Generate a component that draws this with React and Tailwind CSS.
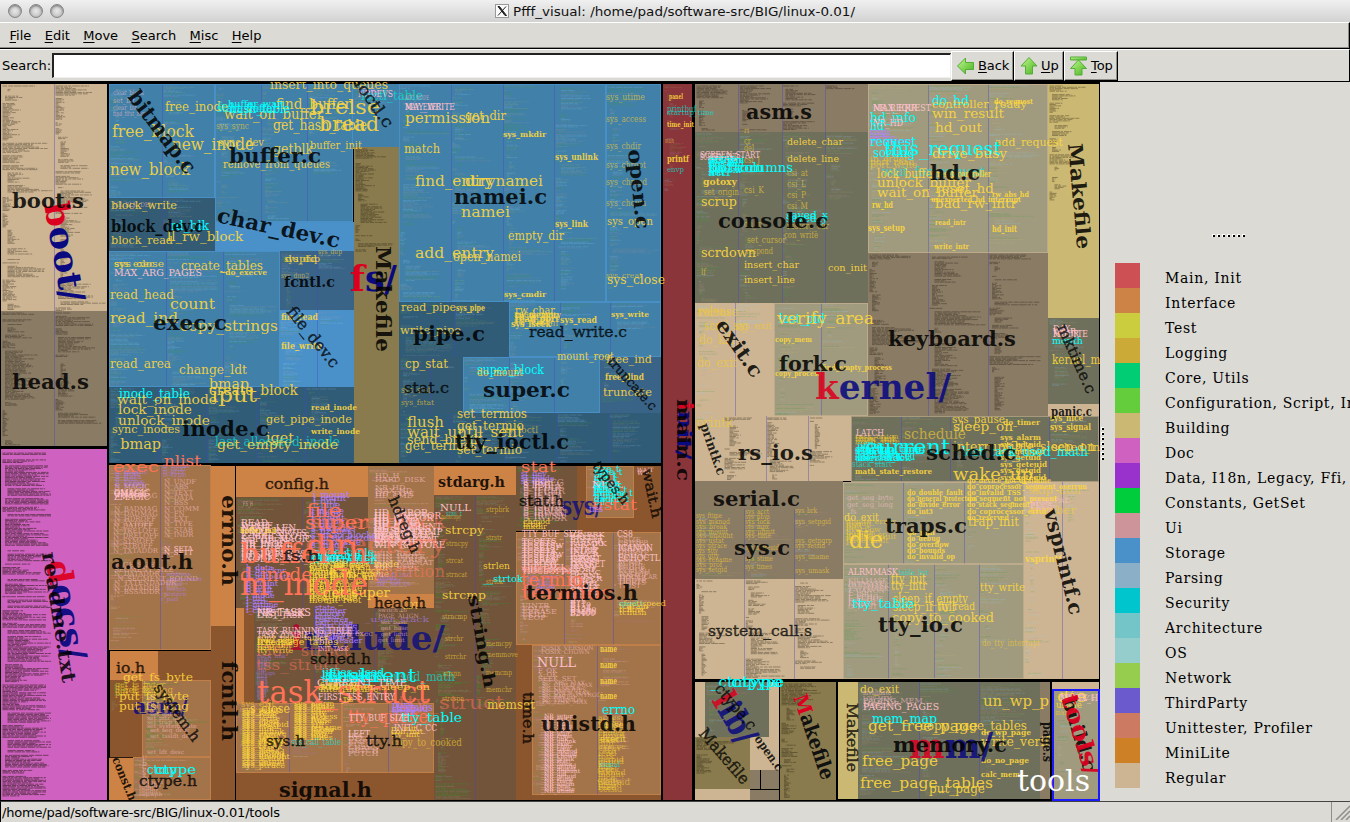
import React from "react";

const SAND = "#cdb593", TAUPE = "#8a7b65", BLUE = "#4180a8", LBLUE = "#4b91c9", DBLUE = "#315c78", NBLUE = "#3a6487";
const OLIVE = "#897b4d", KHAKI = "#cbb873", ORANGE = "#cd8246", BROWN = "#8b552d", TAN = "#a3744a", UMBER = "#71543a";
const SAGE = "#a09b7e", MOSS = "#6f705c", PINK = "#cf62c0", RED = "#8a353a";

// x1, y1, x2, y2, fill, columns, filled share of the last column, palette, outline
const FILES = [
  [1, 84, 107, 311, SAND, 2, 1, "k"], [1, 311, 107, 446, TAUPE, 2, 0.85, "k"],
  [1, 449, 107, 800, PINK, 2, 0, "k"],
  [109, 84, 215, 198, BLUE, 2, 0.95, "b", 1], [215, 84, 353, 222, BLUE, 3, 0.65, "b", 1], [353, 84, 399, 147, BLUE, 1, 0.4, "b"],
  [109, 198, 215, 251, "#335b74", 2, 0.5, "b"], [215, 222, 354, 251, LBLUE, 1, 0, "b"],
  [109, 251, 280, 387, BLUE, 3, 0.9, "b", 1], [280, 251, 354, 310, NBLUE, 2, 0.3, "b"], [279, 310, 354, 387, LBLUE, 2, 0.2, "b"],
  [109, 387, 354, 463, DBLUE, 5, 0.8, "b"], [354, 147, 399, 463, OLIVE, 1, 0.33, "k"],
  [399, 84, 606, 302, BLUE, 4, 0.95, "b", 1], [606, 84, 661, 302, BLUE, 1, 0.95, "b", 1],
  [399, 302, 509, 357, DBLUE, 2, 0.7, "b"], [509, 302, 661, 357, BLUE, 3, 0.5, "b", 1],
  [399, 357, 463, 413, "#335b74", 2, 0.2, "b"], [463, 357, 600, 413, BLUE, 3, 0.5, "b", 1], [600, 357, 661, 413, NBLUE, 1, 0.8, "b"],
  [399, 413, 661, 463, DBLUE, 5, 0.8, "b"],
  [109, 465, 211, 650, TAN, 2, 0.72, "p", 2], [211, 466, 235, 626, ORANGE, 1, 0, "k"], [211, 626, 235, 800, BROWN, 1, 0, "k"],
  [110, 651, 158, 680, ORANGE, 1, 0, "k"], [158, 651, 211, 680, BROWN, 1, 0, "k"], [110, 680, 142, 757, BROWN, 1, 0.4, "g"],
  [142, 680, 211, 757, TAN, 1, 0.98, "g", 2], [109, 757, 133, 800, ORANGE, 1, 0, "k"], [133, 757, 211, 800, TAN, 1, 0.9, "p", 2],
  [236, 466, 368, 497, ORANGE, 1, 0, "k"], [236, 497, 368, 608, UMBER, 2, 0.9, "g"], [368, 466, 434, 594, TAN, 1, 0.95, "p"],
  [368, 594, 434, 608, ORANGE, 1, 0, "k"], [236, 608, 244, 703, ORANGE, 1, 0, "k"], [244, 608, 254, 703, BROWN, 1, 0, "k"],
  [254, 608, 434, 703, UMBER, 3, 0.8, "g"], [236, 703, 342, 773, TAN, 2, 0.8, "p", 2], [342, 703, 434, 773, TAN, 2, 0.5, "p", 2],
  [236, 773, 434, 800, BROWN, 1, 0, "k"], [434, 466, 516, 495, ORANGE, 1, 0, "k"], [434, 495, 516, 800, UMBER, 2, 0.7, "g"],
  [516, 466, 577, 531, UMBER, 1, 0.95, "g"], [577, 466, 586, 532, BROWN, 1, 0, "k"], [586, 466, 634, 518, TAN, 1, 0.7, "p", 2],
  [586, 518, 634, 532, BROWN, 1, 0, "k"], [634, 466, 661, 532, BROWN, 1, 0, "k"],
  [516, 645, 532, 800, BROWN, 1, 0, "k"], [516, 532, 661, 645, TAN, 3, 0.8, "p", 2],
  [532, 645, 661, 795, TAN, 2, 0.95, "p", 2], [532, 795, 661, 800, BROWN, 1, 0, "k"],
  [663, 84, 692, 800, RED, 1, 0.15, "b"],
  [695, 84, 868, 132, TAUPE, 4, 0.1, "k"], [695, 132, 868, 303, MOSS, 4, 0.4, "b"],
  [868, 84, 1048, 253, SAGE, 3, 0.95, "b", 3], [868, 253, 1048, 416, TAUPE, 3, 0.97, "k"], [1048, 84, 1099, 318, KHAKI, 1, 0.5, "k"],
  [695, 303, 774, 416, SAND, 2, 0.2, "b"], [774, 303, 868, 416, SAGE, 2, 0.4, "b", 3],
  [1048, 318, 1099, 404, MOSS, 1, 0.8, "b"], [1048, 404, 1099, 416, SAND, 1, 0, "k"],
  [695, 416, 723, 481, SAND, 1, 0.1, "b"], [723, 416, 851, 481, SAND, 3, 0.8, "k"], [851, 416, 1099, 482, MOSS, 5, 0.4, "b", 3],
  [695, 481, 843, 509, TAUPE, 1, 0, "k"], [695, 509, 843, 579, TAUPE, 3, 0.7, "b"], [695, 579, 843, 679, SAND, 3, 0.9, "k"],
  [843, 482, 1024, 564, SAGE, 3, 0.9, "b", 3], [843, 564, 1024, 679, SAGE, 4, 0.7, "b", 3], [1024, 482, 1099, 679, SAND, 2, 0.2, "b"],
  [695, 682, 779, 737, SAND, 1, 0, "k"], [750, 737, 779, 770, SAND, 1, 0, "k"], [695, 789, 750, 800, SAND, 1, 0, "k"],
  [705, 682, 769, 737, MOSS, 1, 0.9, "b"], [695, 737, 750, 789, OLIVE, 1, 0.7, "k"], [750, 770, 760, 789, TAUPE, 1, 0, "k"],
  [761, 770, 779, 789, TAUPE, 1, 0, "k"], [750, 790, 779, 800, TAUPE, 1, 0, "k"],
  [780, 682, 836, 800, OLIVE, 1, 0.98, "k"],
  [838, 682, 858, 799, KHAKI, 1, 0, "k"], [858, 682, 1040, 799, MOSS, 3, 0.8, "b"], [1040, 682, 1050, 799, TAUPE, 1, 0, "k"],
  [1052, 682, 1099, 689, SAND, 1, 0, "k"], [1054, 691, 1098, 799, SAGE, 1, 0.8, "b"],
];

const PALETTES = {
  k: [["#1c140a", 0.45]],
  b: [["#8fd6ff", 0.26], ["#45a045", 0.28], ["#d8c86a", 0.16], ["#c9a0a0", 0.18]],
  p: [["#ffd0d8", 0.26], ["#b080ff", 0.18], ["#6f9a50", 0.28]],
  g: [["#2fa02f", 0.42], ["#9fb080", 0.28], ["#7fc0c0", 0.22]],
};

function makeRandom(seed) {
  let s = seed;
  return () => {
    s = (s * 1103515245 + 12345) % 2147483648;
    return s / 2147483648;
  };
}

// One path of short horizontal strokes per palette entry, for a file shown as tiny source lines.
function sourceLines(file, index) {
  const [x1, y1, x2, y2, , cols, last, kind] = file;
  const rnd = makeRandom(index * 977 + 31);
  const pal = PALETTES[kind];
  const paths = pal.map(() => "");
  const cw = (x2 - x1) / cols;
  const isDoc = index === 2;
  for (let c = 0; c < cols; c++) {
    if (isDoc && c > 0) break;
    const end = isDoc ? y2 - 3 : c === cols - 1 ? y1 + (y2 - y1) * last : y2 - 1;
    let indent = 0;
    let typical = 0.5;
    for (let y = y1 + 2; y < end; y += 1.3) {
      if (rnd() < 0.13) {
        typical = isDoc ? 0.75 : 0.08 + rnd() * rnd() * 0.75;
        indent = Math.floor(rnd() * 3) * 2.5;
        y += 0.8;
        continue;
      }
      const len = cw * Math.min(isDoc ? 0.82 : 0.85, typical * (0.35 + rnd() * 1.1));
      const k = Math.floor(rnd() * pal.length);
      let x = x1 + c * cw + 1.5 + indent;
      const stop = x + Math.max(2, Math.min(len, cw - indent - 3));
      while (x < stop) {
        const word = Math.min(stop - x, 1.5 + rnd() * 7);
        paths[k] += `M${x.toFixed(1)} ${y.toFixed(1)}h${word.toFixed(1)}`;
        x += word + 0.5 + rnd() * 0.7;
      }
    }
  }
  return paths;
}

const COLORS = {
  k: ["#000000", 0.85], K: ["#000000", 0.72],
  y: ["#ffd83c", 0.9], Y: ["#f2cc30", 0.65],
  c: ["#00ffff", 1], C: ["#00e5dd", 0.7],
  p: ["#ffc0cb", 1], P: ["#ffc0cb", 0.6],
  o: ["#ff7256", 1], O: ["#ff7256", 0.55],
  v: ["#b080ff", 1], V: ["#b080ff", 0.6],
  w: ["#ffffff", 1],
};

// colour, size, x, baseline, width, text, angle
const LABELS = [
  // fs
  ["P", 7, 113, 95, 31, "clear_block"], ["P", 7, 113, 103, 22, "set_bit"], ["P", 7, 113, 110, 24, "clear_bit"], ["P", 7, 113, 116, 34, "find_first_zero"],
  ["y", 13, 165, 111, 63, "free_inode"], ["y", 16, 112, 137, 82, "free_block"], ["y", 16, 172, 150, 82, "new_inode"], ["y", 16, 110, 175, 80, "new_block"],
  ["y", 12, 270, 89, 118, "insert_into_queues"], ["y", 14, 276, 109, 75, "find_buffer"], ["y", 14, 224, 119, 99, "wait_on_buffer"],
  ["y", 14, 273, 130, 94, "get_hash_table"], ["y", 20, 310, 114, 70, "brelse"], ["y", 20, 319, 131, 60, "bread"],
  ["Y", 9, 216, 129, 33, "sys_sync"], ["y", 11, 218, 146, 46, "sync_dev"], ["y", 14, 273, 154, 40, "getblk"], ["y", 11, 310, 149, 52, "buffer_init"],
  ["y", 11, 223, 168, 107, "remove_from_queues"], ["c", 11, 217, 112, 60, "start_buffer"], ["c", 12, 230, 113, 60, "hash_table"], ["C", 10, 217, 109, 48, "free_list"],
  ["c", 10, 228, 107, 56, "buffer_wait"], ["p", 9, 358, 97, 35, "NRDEVS"], ["C", 12, 361, 100, 62, "ioctl_table"],
  ["p", 9, 405, 110, 50, "MAY_WRITE"], ["p", 9, 405, 110, 36, "MAY_EXEC"], ["P", 7, 405, 100, 24, "ACC_MODE"],
  ["P", 7, 113, 207, 40, "NR_BLK_DEV"], ["y", 11, 111, 209, 66, "block_write"], ["y", 11, 111, 244, 62, "block_read"],
  ["c", 12, 170, 230, 39, "rd_blk"], ["y", 13, 167, 241, 76, "ll_rw_block"],
  ["y", 10, 114, 267, 50, "sys_close"], ["y", 10, 114, 267, 40, "sys_exec"], ["y", 12, 181, 270, 82, "create_tables"], ["p", 10, 114, 276, 88, "MAX_ARG_PAGES"],
  ["y", 8, 219, 275, 48, "~do_execve"], ["y", 10, 285, 262, 32, "dupfd"], ["y", 10, 284, 262, 36, "sys_dup"], ["Y", 7, 318, 254, 24, "sys_dup"], ["Y", 7, 281, 278, 28, "sys_dup2"],
  ["y", 12, 110, 299, 64, "read_head"], ["y", 15, 170, 309, 45, "count"], ["y", 15, 110, 323, 68, "read_ind"], ["y", 15, 180, 331, 98, "copy_strings"],
  ["y", 12, 110, 368, 61, "read_area"], ["y", 12, 179, 374, 68, "change_ldt"], ["y", 9, 281, 320, 37, "file_read"], ["y", 9, 281, 349, 41, "file_write"],
  ["c", 12, 119, 398, 71, "inode_table"], ["y", 14, 209, 389, 40, "bmap"], ["y", 14, 209, 395, 89, "create_block"], ["y", 21, 211, 402, 46, "iput"],
  ["y", 13, 117, 404, 100, "wait_on_inode"], ["y", 13, 118, 414, 74, "lock_inode"], ["y", 13, 118, 425, 92, "unlock_inode"],
  ["y", 11, 112, 433, 68, "sync_inodes"], ["y", 14, 113, 449, 48, "_bmap"], ["y", 8, 311, 410, 46, "read_inode"], ["y", 11, 266, 423, 86, "get_pipe_inode"],
  ["y", 8, 311, 434, 49, "write_inode"], ["y", 13, 266, 442, 28, "iget"], ["C", 12, 215, 446, 125, "last_allocated_inode"], ["y", 13, 217, 449, 121, "get_empty_inode"],
  ["y", 14, 405, 123, 85, "permission"], ["y", 13, 465, 120, 41, "get_dir"], ["y", 8, 503, 137, 43, "sys_mkdir"], ["y", 12, 404, 153, 36, "match"],
  ["y", 9, 555, 160, 43, "sys_unlink"], ["y", 15, 415, 186, 78, "find_entry"], ["y", 15, 465, 186, 78, "dirynamei"], ["y", 14, 461, 217, 49, "namei"],
  ["y", 9, 555, 227, 33, "sys_link"], ["y", 13, 508, 240, 56, "empty_dir"], ["y", 15, 415, 258, 79, "add_entry"], ["y", 12, 453, 261, 68, "open_namei"], ["y", 8, 504, 297, 42, "sys_cmdir"],
  ["Y", 9, 606, 100, 39, "sys_utime"], ["Y", 9, 606, 122, 40, "sys_access"], ["Y", 9, 606, 149, 35, "sys_chdir"], ["Y", 9, 606, 168, 40, "sys_chroot"], ["Y", 9, 606, 185, 41, "sys_chmod"],
  ["Y", 9, 606, 206, 40, "sys_chown"], ["y", 11, 607, 225, 46, "sys_open"], ["Y", 8, 606, 278, 36, "sys_creat"], ["y", 12, 607, 284, 58, "sys_close"],
  ["y", 11, 401, 311, 55, "read_pipe"], ["y", 9, 456, 311, 29, "sys_pipe"], ["y", 11, 400, 334, 61, "write_pipe"],
  ["y", 11, 515, 314, 40, "rw_char"], ["y", 9, 515, 318, 46, "rw_memory"], ["y", 9, 515, 322, 44, "read_port"], ["y", 9, 511, 327, 40, "sys_lseek"], ["y", 9, 560, 323, 37, "sys_read"], ["y", 8, 611, 317, 38, "sys_write"],
  ["y", 11, 557, 360, 57, "mount_root"], ["y", 11, 606, 363, 46, "free_ind"], ["y", 9, 605, 380, 39, "free_dind"], ["y", 11, 603, 396, 49, "truncate"],
  ["c", 12, 477, 374, 67, "super_block"], ["y", 11, 477, 376, 46, "do_mount"], ["y", 12, 405, 368, 43, "cp_stat"], ["Y", 9, 401, 393, 30, "sys_stat"], ["Y", 8, 401, 405, 33, "sys_fstat"],
  ["y", 13, 457, 418, 70, "set_termios"], ["y", 14, 407, 427, 37, "flush"], ["y", 12, 457, 430, 67, "get_termio"], ["y", 14, 407, 437, 116, "wait_until_sent"],
  ["y", 12, 407, 444, 81, "send_break_"], ["Y", 9, 502, 433, 36, "tty_ioctl"], ["y", 12, 405, 450, 72, "get_termios"], ["y", 12, 457, 454, 65, "set_termio"],
  // include
  ["o", 14, 113, 472, 46, "exec"], ["o", 14, 164, 466, 37, "nlist"], ["p", 9, 114, 500, 36, "ZMAGIC"], ["p", 9, 114, 496, 36, "QMAGIC"], ["p", 9, 114, 497, 34, "OMAGIC"],
  ["y", 11, 123, 681, 70, "get_fs_byte"], ["y", 11, 119, 700, 70, "put_fs_byte"], ["y", 11, 119, 710, 70, "put_fs_long"], ["Y", 10, 123, 693, 50, "get_fs_long"],
  ["c", 13, 155, 774, 41, "ctype"], ["c", 12, 147, 774, 30, "ctmp"],
  ["P", 7, 241, 506, 12, "_FS_H"], ["y", 8, 240, 533, 37, "buffer_init"], ["O", 18, 310, 528, 136, "super_block"], ["O", 26, 305, 553, 142, "directory"],
  ["o", 18, 306, 517, 36, "file"], ["o", 18, 305, 529, 63, "super"], ["o", 26, 307, 554, 44, "dir"], ["o", 27, 240, 563, 128, "buffer_h"], ["o", 18, 240, 581, 72, "d_inode"],
  ["o", 31, 240, 595, 128, "m_inode"], ["O", 16, 373, 577, 72, "partition"], ["y", 13, 323, 597, 67, "get_super"], ["y", 10, 399, 609, 20, "_LDT"],
  ["p", 11, 257, 616, 54, "NR_TASKS"], ["p", 10, 257, 616, 48, "FIRST_TASK"], ["p", 9, 257, 618, 46, "LAST_TASK"], ["p", 10, 257, 634, 95, "TASK_RUNNING_TIBLE"],
  ["p", 10, 257, 638, 52, "TASK_ZOMBIE"], ["y", 10, 257, 645, 81, "free_page_tables"], ["p", 8, 318, 651, 30, "INIT_TASK"], ["O", 15, 256, 656, 94, "i387_struct"],
  ["O", 15, 256, 670, 84, "tss_struct"], ["o", 31, 257, 703, 173, "task_struct"], ["O", 18, 398, 709, 106, "tty_struct"], ["o", 18, 348, 723, 80, "tty_queue"],
  ["c", 19, 328, 682, 88, "taskrent"], ["c", 12, 325, 682, 56, "last_task_us"], ["C", 12, 388, 681, 67, "_used_math"], ["p", 10, 317, 686, 90, "CURRENT_TIME"],
  ["y", 10, 318, 690, 112, "add_timer_sleep_on"], ["p", 10, 318, 700, 77, "FIRST_TSS_ENTRY"], ["y", 8, 341, 702, 12, "_TSS"], ["Y", 10, 241, 707, 34, "sys_exit"],
  ["y", 12, 250, 713, 40, "s_close"], ["P", 8, 317, 636, 56, "close_on_exec"], ["V", 8, 365, 622, 64, "_user_stack"],
  ["Y", 9, 241, 745, 40, "sys_pause"], ["C", 9, 291, 745, 50, "sys_call_table"], ["c", 13, 401, 722, 61, "tty_table"], ["v", 11, 396, 711, 37, "termios"],
  ["p", 9, 349, 721, 60, "TTY_BUF_SIZE"], ["p", 9, 394, 731, 43, "INIT_C_CC"], ["p", 9, 348, 737, 22, "LEFT"], ["Y", 11, 392, 746, 70, "copy_to_cooked"],
  ["p", 10, 373, 525, 48, "HD_DATA"], ["p", 10, 373, 534, 50, "HD_STATUS"], ["p", 10, 374, 542, 42, "ERR_STAT"],
  ["p", 10, 440, 511, 31, "NULL"], ["C", 7, 446, 516, 16, "size_t"], ["Y", 7, 441, 519, 20, "memcopy"], ["y", 11, 445, 534, 39, "strcpy"], ["Y", 8, 446, 546, 22, "strncpy"],
  ["Y", 8, 446, 563, 17, "strcat"], ["Y", 8, 446, 577, 21, "strncat"], ["y", 11, 442, 599, 44, "strcmp"], ["Y", 8, 442, 619, 25, "strncmp"], ["Y", 8, 445, 641, 18, "strchr"],
  ["Y", 8, 445, 659, 21, "strrchr"], ["Y", 8, 443, 676, 18, "strspn"], ["Y", 8, 442, 701, 22, "strcspn"], ["Y", 8, 486, 512, 23, "strpbrk"], ["Y", 8, 486, 540, 16, "strstr"],
  ["y", 10, 483, 569, 27, "strlen"], ["c", 10, 483, 582, 40, "__strtok"], ["Y", 8, 486, 584, 17, "strtok"], ["Y", 8, 486, 646, 26, "memcpy"], ["Y", 8, 486, 657, 32, "memmove"],
  ["Y", 8, 486, 675, 26, "memcmp"], ["Y", 8, 486, 692, 26, "memchr"], ["y", 12, 487, 709, 48, "memset"],
  ["o", 15, 521, 472, 35, "stat"], ["p", 9, 523, 488, 29, "S_IFMT"], ["p", 10, 592, 488, 31, "NULL"], ["o", 15, 592, 510, 45, "ustat"], ["c", 12, 593, 493, 28, "ptrdiff"], ["v", 9, 589, 512, 14, "tms"],
  ["p", 9, 522, 537, 61, "TTY_BUF_SIZE"], ["p", 9, 617, 537, 16, "CS8"], ["p", 10, 618, 551, 35, "ICANON"], ["p", 9, 618, 561, 42, "ECHOCTL"], ["p", 9, 571, 562, 30, "OPOST"],
  ["p", 9, 571, 567, 34, "ONLRET"], ["P", 9, 522, 573, 56, "winsize_pad"], ["o", 18, 521, 586, 62, "termio"], ["o", 18, 521, 599, 92, "termios"], ["O", 12, 520, 573, 50, "winsize"],
  ["p", 9, 570, 616, 25, "B2400"], ["C", 8, 619, 606, 24, "speed_t"], ["P", 8, 619, 579, 38, "TIOCM_CAR"],
  ["p", 13, 537, 667, 39, "NULL"], ["y", 9, 600, 652, 17, "name"], ["y", 9, 600, 668, 17, "name"], ["y", 9, 600, 684, 17, "name"], ["y", 9, 600, 699, 17, "name"],
  ["c", 13, 602, 714, 33, "errno"], ["y", 10, 600, 728, 24, "close"], ["y", 10, 600, 742, 26, "execit"], ["C", 8, 600, 767, 20, "signal"], ["Y", 9, 597, 773, 18, "sync"], ["Y", 9, 597, 785, 33, "waitpid"], ["Y", 9, 599, 792, 23, "setsid"],
  // init
  ["y", 8, 669, 99, 14, "panel"], ["C", 9, 667, 112, 29, "printbuf"], ["C", 8, 667, 115, 47, "startup_time"], ["y", 8, 667, 127, 27, "time_init"], ["Y", 7, 665, 143, 9, "main"], ["y", 9, 667, 162, 22, "printf"], ["C", 8, 667, 172, 17, "envp"],
  // kernel
  ["Y", 8, 744, 133, 5, "ri"], ["Y", 9, 744, 144, 7, "cr"], ["Y", 9, 744, 151, 10, "del"], ["Y", 9, 744, 163, 16, "csi_J"], ["y", 10, 787, 145, 56, "delete_char"], ["y", 10, 787, 162, 52, "delete_line"],
  ["p", 9, 700, 158, 60, "SCREEN_START"], ["p", 9, 700, 160, 38, "SCREEN_END"], ["c", 12, 737, 172, 56, "columns"], ["c", 12, 708, 172, 56, "bottom"], ["c", 9, 708, 163, 34, "origin"],
  ["c", 9, 708, 167, 36, "scr_end"], ["c", 9, 708, 176, 24, "attr"], ["Y", 9, 787, 176, 21, "csi_at"], ["Y", 9, 787, 187, 19, "csi_L"], ["Y", 9, 787, 198, 19, "csi_P"], ["Y", 9, 787, 209, 21, "csi_M"],
  ["y", 9, 703, 185, 34, "gotoxy"], ["Y", 9, 704, 195, 35, "set_origin"], ["y", 13, 701, 206, 36, "scrup"], ["Y", 9, 744, 193, 20, "csi_K"], ["c", 11, 786, 219, 42, "saved_x"], ["c", 11, 786, 222, 42, "saved_y"],
  ["Y", 9, 744, 227, 18, "csi_m"], ["Y", 9, 787, 229, 42, "restore_cur"], ["Y", 9, 784, 238, 34, "con_write"], ["Y", 9, 747, 243, 39, "set_cursor"], ["y", 13, 701, 257, 55, "scrdown"],
  ["Y", 9, 746, 254, 27, "respond"], ["y", 10, 744, 268, 55, "insert_char"], ["y", 10, 744, 283, 51, "insert_line"], ["y", 10, 828, 271, 39, "con_init"], ["Y", 9, 701, 275, 5, "lf"],
  ["p", 9, 873, 111, 58, "NR_REQUEST"], ["p", 9, 873, 111, 44, "MAX_ERR"], ["c", 13, 870, 122, 46, "hd_info"], ["p", 9, 873, 126, 30, "NR_HD"], ["c", 13, 870, 130, 14, "hd"], ["c", 13, 932, 105, 37, "do_hd"],
  ["y", 11, 932, 108, 95, "controller_ready"], ["y", 8, 994, 104, 39, "do_request"], ["y", 13, 932, 118, 72, "win_result"], ["y", 13, 935, 132, 47, "hd_out"], ["c", 13, 870, 146, 46, "request"],
  ["y", 11, 995, 146, 68, "add_request"], ["c", 19, 884, 155, 117, "this_request"], ["c", 13, 873, 157, 42, "sorting"], ["y", 13, 932, 158, 75, "drive_busy"], ["C", 12, 882, 176, 103, "wait_for_request"],
  ["y", 13, 877, 178, 60, "lock_buffer"], ["y", 13, 877, 187, 94, "unlock_buffer"], ["y", 9, 937, 177, 54, "reset_controller"], ["y", 13, 877, 197, 101, "wait_on_buffer"], ["y", 13, 935, 193, 59, "reset_hd"],
  ["y", 13, 935, 208, 82, "bad_rw_intr"], ["y", 8, 931, 202, 90, "unexpected_hd_interrupt"], ["y", 8, 992, 197, 37, "rw_abs_hd"], ["y", 9, 872, 208, 21, "rw_hd"], ["y", 9, 868, 231, 37, "sys_setup"],
  ["y", 8, 935, 225, 31, "read_intr"], ["y", 8, 934, 249, 35, "write_intr"], ["y", 9, 992, 232, 25, "hd_init"],
  ["Y", 12, 698, 316, 40, "release"], ["Y", 12, 704, 330, 44, "send_sig"], ["Y", 10, 735, 329, 37, "sys_exit"], ["Y", 12, 699, 344, 36, "do_kill"], ["Y", 12, 697, 367, 40, "do_exit"],
  ["c", 13, 779, 323, 46, "last_pid"], ["y", 16, 777, 324, 97, "verify_area"], ["y", 8, 775, 342, 37, "copy_mem"], ["y", 8, 822, 370, 70, "find_empty_process"], ["y", 8, 775, 376, 46, "copy_process"],
  ["p", 9, 1053, 337, 35, "MINUTE"], ["p", 9, 1053, 337, 26, "HOUR"], ["c", 10, 1052, 344, 31, "month"], ["y", 12, 1052, 364, 78, "kernel_mktime"],
  ["Y", 12, 696, 427, 37, "printk"], ["p", 9, 856, 436, 28, "LATCH"], ["Y", 9, 855, 442, 40, "timer_init"], ["Y", 14, 904, 439, 62, "schedule"],
  ["c", 20, 865, 454, 85, "current"], ["c", 12, 855, 454, 70, "startup_time"], ["c", 12, 855, 460, 60, "last_task_used"], ["c", 10, 855, 461, 48, "user_stack"], ["C", 9, 852, 467, 40, "stack_start"], ["y", 8, 855, 474, 77, "math_state_restore"],
  ["y", 11, 952, 423, 53, "sys_pause"], ["y", 13, 953, 431, 60, "sleep_on"], ["y", 8, 1003, 425, 37, "do_timer"], ["y", 8, 1000, 440, 41, "sys_alarm"], ["y", 8, 1000, 447, 41, "sys_getpid"], ["y", 8, 1000, 454, 44, "sys_getppid"],
  ["y", 8, 1000, 460, 41, "sys_getuid"], ["y", 8, 1000, 467, 47, "sys_geteuid"], ["y", 8, 1000, 473, 41, "sys_getgid"], ["y", 8, 1000, 480, 46, "sys_getegid"], ["y", 13, 953, 451, 142, "interruptible_sleep_on"],
  ["c", 12, 962, 456, 126, "last_task_used_math"], ["y", 17, 953, 480, 80, "wake_up"], ["y", 9, 1050, 421, 33, "sys_nice"], ["y", 9, 1050, 430, 41, "sys_signal"], ["y", 11, 1052, 451, 56, "sched_init"],
  ["Y", 8, 696, 518, 26, "sys_ftime"], ["Y", 8, 696, 524, 34, "sys_mknod"], ["Y", 8, 696, 529, 31, "sys_break"], ["Y", 8, 696, 534, 32, "sys_mount"], ["Y", 8, 696, 538, 37, "sys_umount"], ["Y", 8, 696, 543, 28, "sys_ustat"],
  ["Y", 8, 696, 548, 31, "sys_ptrace"], ["Y", 8, 696, 553, 22, "sys_stty"], ["Y", 8, 696, 558, 23, "sys_gtty"], ["Y", 8, 696, 562, 36, "sys_rename"], ["Y", 8, 696, 567, 26, "sys_prof"], ["Y", 8, 696, 572, 31, "sys_setgid"],
  ["Y", 8, 745, 514, 24, "sys_acct"], ["Y", 8, 745, 519, 25, "sys_phys"], ["Y", 8, 745, 524, 25, "sys_lock"], ["Y", 8, 745, 529, 24, "sys_mpx"], ["Y", 8, 745, 534, 30, "sys_ulimit"], ["Y", 8, 745, 538, 26, "sys_time"],
  ["Y", 8, 745, 550, 34, "sys_setreuid"], ["Y", 8, 745, 561, 28, "sys_stime"], ["Y", 8, 745, 569, 27, "sys_times"], ["Y", 8, 795, 513, 22, "sys_brk"], ["Y", 8, 795, 524, 36, "sys_setpgid"], ["Y", 8, 795, 543, 37, "sys_getpgrp"],
  ["Y", 8, 795, 548, 30, "sys_setsid"], ["Y", 8, 795, 559, 34, "sys_uname"], ["Y", 8, 795, 573, 34, "sys_umask"],
  ["y", 8, 907, 495, 56, "do_double_fault"], ["y", 8, 907, 501, 70, "do_general_protection"], ["y", 8, 907, 507, 53, "do_divide_error"], ["y", 8, 907, 514, 26, "do_int3"], ["y", 8, 907, 535, 28, "do_nmi"], ["y", 8, 907, 541, 33, "do_debug"],
  ["y", 8, 907, 547, 42, "do_overflow"], ["y", 8, 907, 553, 38, "do_bounds"], ["y", 8, 907, 559, 48, "do_invalid_op"], ["y", 8, 967, 483, 84, "do_device_not_available"], ["y", 8, 967, 489, 120, "do_coprocessor_segment_overrun"],
  ["y", 8, 967, 495, 54, "do_invalid_TSS"], ["y", 8, 967, 501, 90, "do_segment_not_present"], ["y", 8, 967, 507, 63, "do_stack_segment"], ["y", 8, 967, 514, 80, "do_coprocessor_error"], ["y", 8, 967, 520, 42, "do_reserved"],
  ["y", 12, 968, 526, 51, "trap_init"], ["y", 11, 844, 521, 35, "do_exit"], ["y", 24, 849, 548, 34, "die"], ["Y", 11, 1029, 494, 52, "skip_atoi"], ["Y", 11, 1030, 514, 46, "number"], ["y", 9, 1025, 562, 37, "vsprintf"],
  ["p", 9, 848, 575, 50, "ALRMMASK"], ["C", 8, 899, 575, 29, "table_list"], ["y", 12, 891, 583, 35, "tty_init"], ["y", 12, 891, 590, 36, "tty_intr"], ["y", 12, 893, 603, 75, "sleep_if_empty"], ["y", 12, 893, 611, 62, "sleep_if_full"],
  ["y", 11, 937, 610, 38, "tty_read"], ["c", 13, 852, 608, 62, "tty_table"], ["y", 13, 892, 622, 102, "copy_to_cooked"], ["y", 11, 980, 591, 45, "tty_write"], ["Y", 9, 982, 646, 58, "do_tty_interrupt"],
  // mm, tools, lib
  ["c", 14, 711, 687, 73, "_ctmpype"], ["c", 14, 731, 687, 52, "ctype"], ["y", 11, 860, 693, 39, "do_exit"], ["P", 8, 863, 695, 28, "invalidate"], ["P", 8, 863, 701, 29, "LOW_MEM"], ["p", 10, 863, 710, 76, "PAGING_PAGES"],
  ["c", 13, 872, 723, 65, "mem_map"], ["y", 14, 868, 731, 110, "get_free_page"], ["y", 12, 920, 730, 107, "copy_page_tables"], ["y", 15, 983, 706, 66, "un_wp_p"], ["y", 8, 981, 735, 50, "do_wp_page"],
  ["y", 13, 981, 746, 68, "write_verif"], ["y", 14, 862, 766, 76, "free_page"], ["y", 8, 981, 763, 48, "do_no_page"], ["y", 8, 981, 777, 39, "calc_mem"], ["y", 14, 860, 788, 133, "free_page_tables"], ["y", 12, 929, 793, 56, "put_page"],
  ["y", 16, 1057, 702, 30, "die"], ["p", 9, 1060, 701, 38, "MINIX_H"], ["y", 10, 1056, 708, 26, "usage"], ["Y", 8, 1055, 715, 15, "main"],
];

const FILE_NAMES = [
  ["k", 21, 12, 208, 72, "boot.s"], ["k", 21, 12, 389, 77, "head.s"], ["k", 20, 42, 553, 132, "readme.txt", 81],
  ["k", 21, 127, 97, 98, "bitmap.c", 53], ["k", 21, 229, 163, 92, "buffer.c"], ["k", 21, 216, 222, 125, "char_dev.c", 12], ["k", 16, 111, 232, 92, "block_dev.c"],
  ["K", 16, 354, 84, 55, "ioctl.c", 55], ["k", 20, 376, 246, 106, "Makefile", 90], ["k", 21, 153, 330, 74, "exec.c"], ["k", 15, 284, 287, 51, "fcntl.c"], ["K", 16, 286, 312, 73, "file_dev.c", 51],
  ["k", 21, 182, 436, 87, "inode.c"], ["k", 21, 454, 204, 93, "namei.c"], ["k", 20, 628, 150, 80, "open.c", 84], ["k", 21, 413, 341, 72, "pipe.c"], ["K", 15, 529, 337, 98, "read_write.c"],
  ["K", 15, 404, 393, 45, "stat.c"], ["k", 21, 483, 397, 87, "super.c"], ["K", 13, 607, 362, 66, "truncate.c", 48], ["k", 21, 455, 449, 114, "tty_ioctl.c"],
  ["k", 20, 111, 569, 82, "a.out.h"], ["k", 20, 222, 495, 91, "errno.h", 90], ["k", 20, 222, 661, 80, "fcntl.h", 90], ["K", 15, 116, 673, 29, "io.h"], ["K", 15, 153, 688, 68, "system.h", 54],
  ["K", 14, 139, 786, 58, "ctype.h"], ["k", 12, 112, 759, 46, "const.h", 68], ["K", 15, 265, 489, 64, "config.h"], ["K", 15, 283, 561, 37, "fs.h"], ["K", 15, 388, 499, 60, "hdreg.h", 67],
  ["K", 14, 374, 608, 52, "head.h"], ["K", 15, 310, 664, 61, "sched.h"], ["K", 15, 266, 746, 39, "sys.h"], ["K", 15, 366, 746, 36, "tty.h"], ["k", 20, 279, 797, 93, "signal.h"], ["k", 15, 438, 487, 67, "stdarg.h"],
  ["k", 17, 468, 596, 94, "string.h", 80], ["K", 15, 519, 506, 45, "stat.h"], ["K", 14, 592, 466, 50, "types.h", 52], ["K", 14, 642, 470, 50, "wait.h", 78], ["k", 21, 526, 600, 112, "termios.h"],
  ["K", 14, 523, 692, 52, "time.h", 90], ["k", 21, 541, 731, 95, "unistd.h"], ["k", 18, 677, 399, 82, "main.c", 90],
  ["k", 21, 746, 119, 66, "asm.s"], ["k", 21, 718, 228, 110, "console.c"], ["k", 21, 930, 180, 50, "hd.c"], ["k", 20, 1068, 144, 106, "Makefile", 85], ["k", 21, 888, 346, 128, "keyboard.s"],
  ["k", 20, 715, 325, 66, "exit.c", 55], ["k", 21, 779, 371, 68, "fork.c"], ["K", 15, 1057, 327, 74, "mktime.c", 66], ["k", 12, 1051, 416, 41, "panic.c"], ["k", 13, 700, 425, 54, "printk.c", 71],
  ["k", 20, 738, 460, 75, "rs_io.s"], ["k", 21, 926, 460, 90, "sched.c"], ["k", 21, 713, 506, 87, "serial.c"], ["k", 21, 734, 555, 56, "sys.c"], ["K", 15, 708, 636, 104, "system_call.s"],
  ["k", 21, 885, 533, 82, "traps.c"], ["k", 21, 878, 632, 85, "tty_io.c"], ["k", 20, 1044, 511, 108, "vsprintf.c", 76], ["K", 16, 714, 689, 55, "ctype.c", 50], ["K", 16, 698, 734, 68, "Makefile", 49],
  ["k", 12, 754, 739, 40, "open.c", 55], ["K", 15, 847, 703, 69, "Makefile", 90], ["k", 21, 893, 752, 114, "memory.c"], ["k", 12, 1043, 722, 40, "page.s", 90], ["k", 19, 1062, 700, 76, "build.c", 73],
];

// first letter is red, the rest navy: size, x, baseline, width, text, angle, opacity
const DIRS = [
  [34, 44, 204, 101, "boot/", 80, 1], [34, 46, 562, 101, "docs/", 80, 0.95], [35, 350, 291, 47, "fs/", 0, 1], [36, 815, 399, 136, "kernel/", 0, 0.88],
  [34, 290, 650, 155, "include/", 0, 0.8], [20, 679, 401, 58, "init/", 92, 1], [34, 711, 700, 55, "lib/", 60, 0.85],
  [36, 909, 758, 84, "mm/", 0, 0.85],
];
const TOOLS_DIR = [24, 1061, 697, 84, "tools/", 73, 0.95];

// dense runs of identifiers: colour, size, x, first baseline, step, words
const RUNS = [
  ["V", 8, 115, 474, 2.4, "a_magic a_text a_data a_bss a_syms a_entry a_trsize"], ["V", 7, 163, 468, 3, "n_name n_next n_strx n_type"], ["P", 7, 114, 489, 4.6, "N_MAGIC N_SET N_BADMAG"],
  ["P", 7, 114, 511, 5, "N_BADMAG N_DADMAG N_HDROFF N_TXTOFF"], ["P", 7, 113, 528, 5, "N_DATOFF N_TRELOFF N_DRELOFF N_SYMOFF N_STROFF N_TXTADDR"], ["P", 7, 114, 567, 4.5, "PAGE_SIZE SEGMENT_SIZE N_DATADDR _N_SEGMENT_ROUND N_TXTENDADDR N_DATADDR N_BSSADDR"],
  ["P", 7, 164, 484, 5.3, "N_UNDF N_ABS N_TEXT N_DATA N_BSS N_COMM N_FN N_EXT N_TYPE N_STAB N_INDR"], ["V", 6, 161, 576, 5, "r_address r_symbolnum r_pcrel r_length r_extern r_pad"], ["p", 7, 164, 551, 4, "N_SETA N_SETT"],
  ["Y", 8, 115, 687, 3, "get_fs_byte get_fs_word get_fs_long put_fs_byte"], ["P", 6, 147, 700, 4, "sti cli nop iret _set_gate set_intr_gate set_trap_gate set_system_gate _set_seg_desc"], ["P", 6, 147, 738, 16, "_set_tssldt_desc set_ldt_desc"],
  ["P", 6, 139, 760, 3, "_U _L _D _C _P _S _X _SP isalnum isalpha iscntrl isdigit isgraph"],
  ["v", 9, 313, 498, 3.2, "i_mount i_count i_dirt i_pipe"], ["p", 9, 241, 526, 2.6, "READ WRITE NAME_LEN ROOT_INO I_MAP_SLOTS Z_MAP_SLOTS SUPER_MAGIC NR_OPEN NR_INODE NR_FILE NR_SUPER NR_HASH NR_BUFFERS BLOCK_SIZE INODES_PER_BLOCK"],
  ["v", 9, 311, 514, 3.4, "f_mode f_flags f_count f_inode f_pos s_ninodes s_nzones s_imap_blocks s_firstdatazone s_max_size s_magic"], ["v", 8, 246, 570, 3.1, "b_data b_blocknr b_dev b_uptodate b_dirt b_count b_lock b_wait b_prev i_mode i_uid i_size i_mtime i_atime i_ctime"],
  ["c", 11, 310, 556, 2.6, "inode_table file_table super_block start_buffer"], ["y", 9, 309, 566, 2.3, "truncate sync_inodes wait_on bmap namei_get create_block iput iget getblk ll_rw_block brelse bread_page new_block free_block new_inode free_inode mount_root"],
  ["y", 9, 330, 567, 3.3, "get_pipe_inode get_hash_tbl ll_rw_block insert_queue buffer_init free_list"], ["P", 8, 375, 478, 4, "HD_H HARD_DISK"], ["P", 8, 375, 490, 2.8, "NR_HD MAX_HD HD_TYPE HD_CMD"],
  ["p", 9, 374, 516, 2.7, "HD_ERROR HD_NSECTOR HD_SECTOR HD_LCYL HD_HCYL HD_CURRENT HD_STATUS HD_PRECOMP BUSY_STAT READY_STAT WRERR_STAT SEEK_STAT WIN_RESTORE"], ["P", 8, 374, 556, 3, "WIN_READ WIN_WRITE WIN_VERIFY WIN_FORMAT WIN_INIT WIN_SEEK"],
  ["V", 8, 377, 577, 3, "boot_ind head sector nr_sects"],
  ["v", 8, 315, 610, 3, "state counter priority signal restorer exit_code start_code end_code start_stack brk_pgrp session euid_leader"], ["V", 6, 257, 658, 2.8, "back_link esp0 ss0 esp1 cr3 eip eflags eax ecx edx ebx esp ebp esi edi ldt"],
  ["y", 8, 257, 640, 2.5, "copy_page_tables free_page schedule trap_init panic tty_write"], ["P", 6, 378, 612, 6, "switch_to PAGE_ALIGN _set_base _get_base _get_limit get_limit"],
  ["c", 11, 322, 676, 3, "jiffies_used last_task startup_time"], ["y", 9, 320, 687, 2.4, "sleep_on wake_up interruptible"],
  ["y", 8, 242, 712, 2.15, "sys_setup sys_exit sys_fork sys_read sys_write sys_open sys_close sys_waitpid sys_creat sys_link sys_unlink sys_execve sys_chdir sys_time sys_mknod sys_chmod sys_chown sys_break sys_stat sys_lseek sys_getpid sys_mount sys_umount sys_setuid sys_getuid sys_stime sys_ptrace"],
  ["y", 8, 294, 706, 2.15, "sys_alarm sys_fstat sys_pause sys_utime sys_stty sys_gtty sys_access sys_nice sys_ftime sys_sync sys_kill sys_rename sys_mkdir sys_rmdir sys_dup sys_pipe sys_times"],
  ["v", 9, 392, 708, 3.5, "pgrp stopped write"], ["P", 8, 348, 738, 3, "INC DEC EMPTY FULL CHARS GETCH PUTCH"], ["y", 8, 391, 731, 3, "rs_init con_init tty_init"],
  ["v", 8, 521, 476, 2.7, "st_dev st_ino st_mode st_uid"], ["P", 9, 523, 486, 2.5, "S_IFREG S_IFBLK S_IFDIR S_IFCHR S_IFIFO S_ISUID S_ISGID S_ISVTX S_ISREG S_ISDIR S_ISCHR S_ISBLK S_IRWXU S_IRUSR S_IWUSR"], ["y", 8, 523, 524, 2.5, "chmod fstat mkdir"],
  ["c", 9, 594, 472, 3, "size_t time_t pid_t uid_t gid_t dev_t ino_t mode_t umode_t nlink_t daddr_t off_t"], ["p", 6, 637, 472, 3, "WAIT WIF"],
  ["p", 8, 522, 543, 2.4, "TCGETS TCSETS TCSETSW TCSETSF TCGETA TCSETA TCSETAW TCSETAF TCSBRK TCXONC TCFLSH TIOCEXCL TIOCNXCL TIOCSCTTY"], ["p", 8, 570, 537, 2.9, "IGNBRK BRKINT IGNPAR PARMRK INPCK ISTRIP INLCR IGNCR ICRNL IUCLC IXON IXANY IXOFF OLCUC OCRNL ONOCR OFILL OFDEL NLDLY CRDLY TABDLY BSDLY B50 B75 B110 B134 B1200 B9600"],
  ["V", 8, 527, 579, 3, "ws_row ws_col c_iflag c_oflag c_cflag c_lflag"], ["P", 8, 522, 608, 3, "VINTR VQUIT VERASE VKILL VEOF"], ["P", 7, 618, 542, 2.7, "CSIZE CSTOPB CREAD PARENB PARODD HUPCL CLOCAL ISIG XCASE ECHO ECHOE ECHOK NOFLSH TOSTOP TIOCLE TIODTR TIORTS TIOST"],
  ["y", 8, 619, 606, 3, "cfgetispeed tcdrain tcflow tcflush"], ["P", 6, 538, 650, 4, "_POSIX_VERSION _POSIX_CHOWN"], ["P", 7, 538, 673, 4, "F_OK X_OK SEEK_SET"], ["P", 6, 539, 685, 2.4, "_SC_ARG_MAX _SC_CHILD_MAX _SC_CLOCKS _SC_NGROUPS _SC_OPEN_MAX _SC_JOB_CONTROL _SC_SAVED _SC_VERSION _PC_LINK_MAX"],
  ["p", 6, 541, 718, 2.5, "_NR_setup _NR_exit _NR_fork _NR_read _NR_write _NR_open _NR_close _NR_wait _NR_creat _NR_link _NR_unlink _NR_exec _NR_chdir _NR_time _NR_mknod _NR_chmod _NR_chown _NR_break _NR_stat _NR_lseek _NR_getpid _NR_mount _NR_umount _NR_uid _NR_getuid _NR_stime _NR_trace _NR_alarm _NR_fstat _NR_pause _NR_utime"],
  ["Y", 8, 598, 720, 2.6, "access acct alarm brk chdir chmod chown chroot close creat dup execve execv _exit fcntl fork getpid getuid kill link lseek mknod mount nice open pause pipe read"],
  ["c", 9, 709, 161, 2.4, "origin scr_end pos_x pos_y top bottom attr"], ["v", 8, 870, 134, 3, "cmd head sector nr_sectors"], ["Y", 9, 870, 162, 3, "in_order port_read port_write"],
  ["Y", 9, 514, 317, 2.2, "read_dev write_dev rw_port rw_mem rw_kmem"], ["c", 10, 857, 449, 3, "jiffies startup_time current last_task user_stack"], ["Y", 8, 855, 439, 2.4, "task_union show_task math_state"],
  ["Y", 8, 846, 524, 2.1, "divide_error debug nmi int3 overflow bounds invalid_op double_fault reserved page_fault"], ["P", 7, 847, 500, 7, "get_seg_byte get_seg_long _fs"],
  ["P", 7, 848, 583, 2.6, "KILLMASK INTMASK QUITMASK TSTPMASK L_CANON L_ISIG L_ECHO L_ECHOE I_UCLC I_NLCR O_POST"], ["P", 8, 1030, 503, 2.4, "ZEROPAD SIGN PLUS SPACE LEFT"], ["p", 8, 1053, 330, 3, "DAY YEAR"],
  ["P", 7, 1060, 697, 3, "MINIX SYS_SIZE"], ["P", 8, 863, 703, 2.5, "PAGING_MEM MAP_NR USED"], ["V", 7, 360, 92, 3, "ioctl rs_tty"], ["Y", 7, 698, 312, 2.6, "release free_task"],
];

function Label({ item, bold }) {
  const [color, size, x, y, width, text, angle] = item;
  const [fill, opacity] = COLORS[color];
  return (
    <text
      x={x} y={y} fontSize={size} fill={fill} fillOpacity={opacity} fontWeight={bold ? 700 : size < 9.5 && color === "y" ? 700 : 400}
      stroke={color === "K" ? fill : undefined} strokeWidth={color === "K" ? 0.45 : undefined} strokeOpacity={color === "K" ? opacity : undefined}
      textLength={width} lengthAdjust="spacingAndGlyphs" transform={angle ? `rotate(${angle} ${x} ${y})` : undefined}
    >
      {text}
    </text>
  );
}

function Directory({ item }) {
  const [size, x, y, width, text, angle, opacity] = item;
  return (
    <text x={x} y={y} fontSize={size} fontWeight="700" fillOpacity={opacity} textLength={width} lengthAdjust="spacingAndGlyphs" transform={`rotate(${angle} ${x} ${y})`}>
      <tspan fill={text === "include/" ? "#b40028" : "#dc0020"}>{text[0]}</tspan>
      <tspan fill={text === "tools/" ? "#dc0020" : "#0a0a80"}>{text.slice(1)}</tspan>
    </text>
  );
}

function Treemap() {
  return (
    <svg className="block h-[719px] w-[1100px] shrink-0" viewBox="0 82 1100 719" fontFamily="'DejaVu Serif', serif">
      <rect x="0" y="82" width="1100" height="719" fill="#000" />
      {FILES.map((f, i) => {
        const [x1, y1, x2, y2, fill, cols, , kind, outline] = f;
        const stroke = outline === 1 ? "#4b9ad8" : outline === 2 ? "#d4864a" : "#cdb593";
        return (
          <g key={i}>
            <rect x={x1} y={y1} width={x2 - x1} height={y2 - y1} fill={fill} />
            {sourceLines(f, i).map((d, k) => (
              <path key={k} d={d} stroke={PALETTES[kind][k][0]} strokeOpacity={i === 2 ? 0.7 : PALETTES[kind][k][1]} strokeWidth="0.75" />
            ))}
            {i !== 2 && Array.from({ length: cols - 1 }, (_, c) => (
              <path key={c} d={`M${Math.round(x1 + ((x2 - x1) * (c + 1)) / cols) + 0.5} ${y1}V${y2}`} stroke="#4646c8" strokeOpacity="0.4" />
            ))}
            {outline && <rect x={x1 + 0.5} y={y1 + 0.5} width={x2 - x1 - 1} height={y2 - y1 - 1} fill="none" stroke={stroke} strokeOpacity="0.6" />}
          </g>
        );
      })}
      <path d="M235.5 466V800M109 650.5H211M109 757.5H133M1051.5 682V800M779.5 682V800" stroke="#000" strokeOpacity="0.8" />
      <Directory item={DIRS[4]} />
      <text x="561" y="515" fontSize="26" fontWeight="700" fill="#0a0a80" fillOpacity="0.8" textLength="41" lengthAdjust="spacingAndGlyphs">sys/</text>
      <text x="133" y="714" fontSize="22" fontWeight="700" fill="#0a0a80" fillOpacity="0.85" textLength="55" lengthAdjust="spacingAndGlyphs">asm/</text>
      {RUNS.map(([color, size, x, y, step, words], r) => (
        <g key={r} fontSize={size} fill={COLORS[color][0]} fillOpacity={COLORS[color][1]}>
          {words.split(" ").map((w, i) => <text key={i} x={x} y={y + i * step}>{w}</text>)}
        </g>
      ))}
      {LABELS.map((item, i) => <Label key={i} item={item} />)}
      {DIRS.filter((d) => d[4] !== "include/").map((item) => <Directory key={item[4]} item={item} />)}
      {FILE_NAMES.map((item, i) => <Label key={i} item={item} bold={item[0] === "k"} />)}
      <Directory item={TOOLS_DIR} />
      <text x="793" y="697" fontSize="20" fontWeight="700" fill="#111" textLength="89" lengthAdjust="spacingAndGlyphs" transform="rotate(71 793 697)">
        <tspan fill="#dc0020">M</tspan>akefile
      </text>
      <path d="M1053 690H1099V800H1053Z" fill="none" stroke="#1a1aff" strokeWidth="2" />
      <Label item={["w", 29, 1017, 791, 73, "tools"]} />
    </svg>
  );
}

const LEGEND = [
  ["Main, Init", "bg-[#cd5055]"], ["Interface", "bg-[#cd8246]"], ["Test", "bg-[#cbcd3f]"], ["Logging", "bg-[#cbaa37]"], ["Core, Utils", "bg-[#00cd74]"],
  ["Configuration, Script, Interop", "bg-[#64cd3c]"], ["Building", "bg-[#cbb873]"], ["Doc", "bg-[#cf62c0]"], ["Data, I18n, Legacy, Ffi, Backup", "bg-[#9932cc]"],
  ["Constants, GetSet", "bg-[#00cd3c]"], ["Ui", "bg-[#cd9599]"], ["Storage", "bg-[#4b91c9]"], ["Parsing", "bg-[#8aafc6]"], ["Security", "bg-[#00c5cd]"],
  ["Architecture", "bg-[#74c5c8]"], ["OS", "bg-[#94cdcb]"], ["Network", "bg-[#96cd4e]"], ["ThirdParty", "bg-[#6a5acd]"], ["Unittester, Profiler", "bg-[#cd7a62]"],
  ["MiniLite", "bg-[#cd8026]"], ["Regular", "bg-[#cdb593]"],
];

function Arrow({ kind }) {
  return (
    <svg className="h-5 w-5 shrink-0" viewBox="0 0 20 20">
      <defs>
        <linearGradient id={`g-${kind}`} x1="0" y1="0" x2="1" y2="1">
          <stop offset="0" stopColor="#c5f59a" /><stop offset="0.5" stopColor="#84d654" /><stop offset="1" stopColor="#48b02a" />
        </linearGradient>
      </defs>
      <g fill={`url(#g-${kind})`} stroke="#55ad38" strokeLinejoin="round">
        {kind === "back" && <path d="M1.5 10L9.5 2V6.5H17.5V13.5H9.5V18Z" />}
        {kind === "up" && <path d="M10 1.5L18 10H13.5V18H6.5V10H2Z" />}
        {kind === "top" && <><path d="M1.5 1H17.5V4H1.5Z" /><path d="M9.5 4L17.5 12.5H13V19H6V12.5H1.5Z" /></>}
      </g>
    </svg>
  );
}

function ToolButton({ kind, label, size }) {
  return (
    <button className={`flex h-[30px] items-center gap-[2px] border-t border-l border-r border-b border-t-white border-l-white border-r-black border-b-black pl-1 shadow-[inset_-1px_-1px_0_#8f8e89] ${size}`}>
      <Arrow kind={kind} />
      <span className="tracking-[-0.1px]"><span className="underline underline-offset-2">{label[0]}</span>{label.slice(1)}</span>
    </button>
  );
}

export default function App() {
  return (
    <div className="flex h-[822px] w-[1350px] flex-col overflow-hidden bg-[#dbdad5] font-['DejaVu_Sans',sans-serif] text-[13px] leading-none text-black">
      <header className="relative flex h-[22px] shrink-0 items-center justify-center gap-1 bg-linear-to-b from-[#f0f0f0] to-[#d2d2d2] text-[12px]">
        <div className="absolute top-1 left-2 flex gap-[7px]">
          {[0, 1, 2].map((i) => (
            <span key={i} className="h-[14px] w-[14px] rounded-full border border-[#858585] bg-radial from-[#e8e8e8] to-[#b4b4b4] shadow-[inset_0_1px_2px_#777]" />
          ))}
        </div>
        <svg className="h-[14px] w-[14px]" viewBox="0 0 14 14">
          <rect x="0.5" y="0.5" width="13" height="13" fill="#fafafa" stroke="#999" />
          <path d="M3 2.5L10 11.5H11.5L4.5 2.5Z" fill="#222" stroke="#222" /><path d="M11 2.5L3 11.5" stroke="#222" />
        </svg>
        <svg className="h-4 w-[343px]" viewBox="0 0 343 16">
          <text x="0" y="13" fontSize="12" fill="#111" fontFamily="'DejaVu Sans', sans-serif" textLength="342" lengthAdjust="spacingAndGlyphs">Pfff_visual: /home/pad/software-src/BIG/linux-0.01/</text>
        </svg>
      </header>
      <nav className="flex h-[27px] shrink-0 items-center gap-[13.4px] border-t border-r border-b border-t-white border-r-black border-b-black pl-[9.5px] shadow-[inset_-1px_-1px_0_#8f8e89]">
        {["File", "Edit", "Move", "Search", "Misc", "Help"].map((m) => (
          <span key={m}><span className="underline underline-offset-2">{m[0]}</span>{m.slice(1)}</span>
        ))}
      </nav>
      <div className="flex h-[33px] shrink-0 items-center border-t border-r border-b border-t-white border-r-black border-b-black pl-[2px]">
        <span className="w-[50px] whitespace-nowrap">Search:</span>
        <input className="h-[25px] w-[899px] border-t-2 border-l-2 border-r border-b border-t-[#222] border-l-[#222] border-r-[#eee] border-b-[#eee] bg-white outline-none" />
        <ToolButton kind="back" label="Back" size="w-[63px]" />
        <ToolButton kind="up" label="Up" size="w-[50px]" />
        <ToolButton kind="top" label="Top" size="w-[54px]" />
      </div>
      <main className="flex h-[719px] shrink-0">
        <Treemap />
        <div className="flex w-[5px] shrink-0 flex-col gap-[2px] pt-[345px] pl-[1px]">
          {[0, 1, 2, 3, 4, 5, 6].map((i) => <i key={i} className="block h-[3px] w-[3px] border-t border-l border-t-white border-l-white bg-black" />)}
        </div>
        <aside className="flex w-[245px] shrink-0 flex-col overflow-hidden pl-[10px] font-['DejaVu_Serif',serif] text-[14px] tracking-[0.7px]">
          <div className="flex h-[181px] shrink-0 gap-[2px] pt-[152px] pl-[97px]">
            {[0, 1, 2, 3, 4, 5, 6].map((i) => <i key={i} className="block h-[3px] w-[3px] border-t border-l border-t-white border-l-white bg-black" />)}
          </div>
          {LEGEND.map(([name, color]) => (
            <div key={name} className="flex h-[25px] shrink-0 items-center gap-[25px]">
              <span className={`h-[25px] w-[25px] shrink-0 ${color}`} />
              <span className="pt-1 whitespace-nowrap">{name}</span>
            </div>
          ))}
        </aside>
      </main>
      <footer className="flex h-[21px] shrink-0 items-center justify-between border-t border-l border-t-[#444] border-l-black pl-[1px]">
        <span className="flex h-full w-[1330px] items-center border-r border-r-[#8f8e89] tracking-[-0.2px]">/home/pad/software-src/BIG/linux-0.01/tools</span>
        <svg className="h-4 w-4" viewBox="0 0 16 16"><path d="M16 2L2 16M16 7L7 16M16 12L12 16" stroke="#8f8e89" strokeWidth="1.5" /></svg>
      </footer>
    </div>
  );
}
